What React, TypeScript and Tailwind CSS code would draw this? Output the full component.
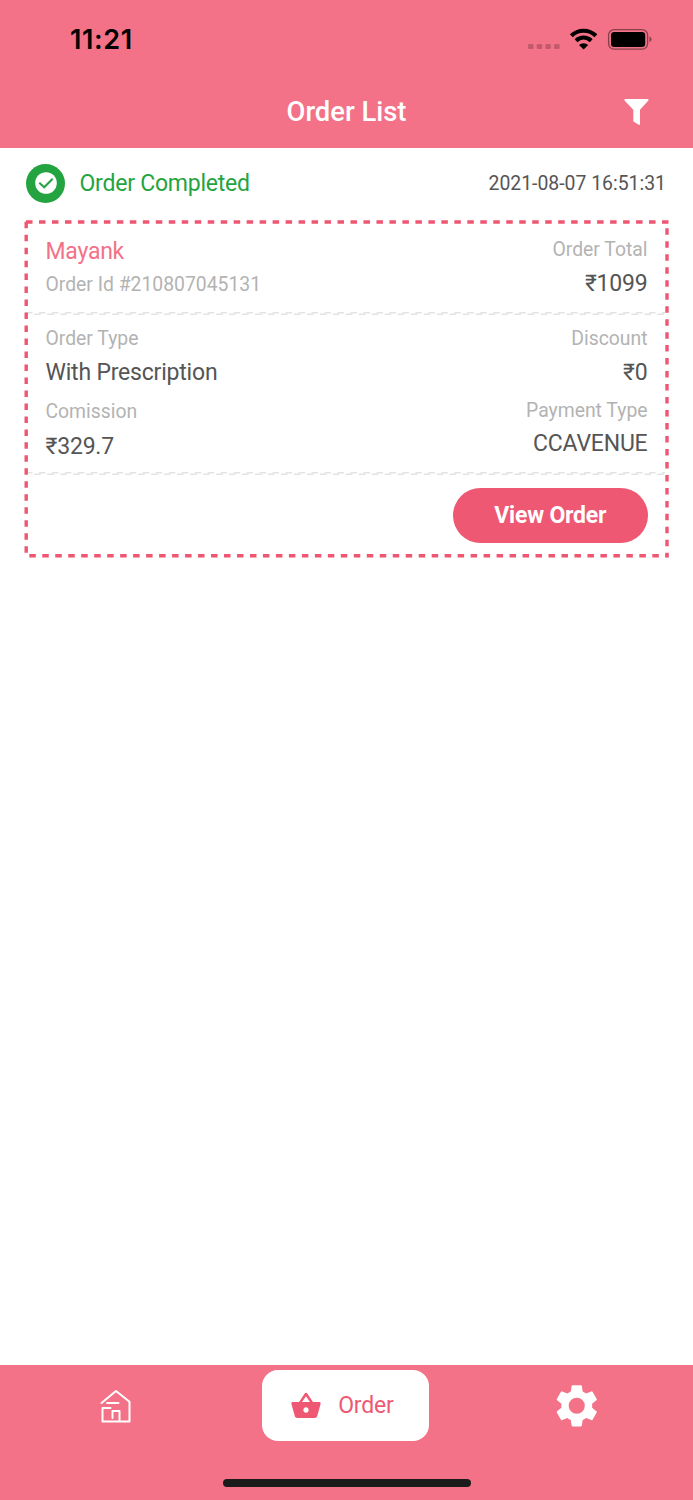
import { MdShoppingBasket } from 'react-icons/md';

const order = {
  status: 'Order Completed',
  date: '2021-08-07 16:51:31',
  customer: 'Mayank',
  id: 'Order Id #210807045131',
};

const StatusBar = () => (
  <div className="flex h-[76px] items-start justify-between pt-[22px] pr-[41px] pl-[70px] text-black">
    <span className="font-[Inter] text-[27px] leading-[35px] font-semibold tracking-[0.6px]">
      11:21
    </span>
    <svg className="mt-[4px]" width="126" height="28" viewBox="526 26 126 28" fill="none">
      <g fill="#c25a6b">
        <rect x="528" y="44" width="5.5" height="5" rx="1.3" />
        <rect x="536.7" y="44" width="5.5" height="5" rx="1.3" />
        <rect x="545.4" y="44" width="5.5" height="5" rx="1.3" />
        <rect x="554.1" y="44" width="5.5" height="5" rx="1.3" />
      </g>
      <g stroke="#000" strokeWidth="4.1">
        <path d="M571.3 35.8a17.4 17.4 0 0 1 24.6 0" />
        <path d="M576 40.7a10.8 10.8 0 0 1 15.2 0" />
      </g>
      <path d="M583.6 49.6l-4.6-4.6a6.6 6.6 0 0 1 9.2 0z" fill="#000" />
      <rect x="608.6" y="29.6" width="39" height="19.6" rx="5.5" stroke="#85404c" strokeWidth="1.3" />
      <rect x="611" y="32" width="34.2" height="15" rx="3.3" fill="#000" />
      <path d="M649.5 36.5c2.8 1 2.8 4.6 0 5.6z" fill="#85404c" />
    </svg>
  </div>
);

const Header = () => (
  <header className="h-[148px] bg-[#f37287]">
    <StatusBar />
    <div className="grid grid-cols-[1fr_auto_1fr] items-center">
      <h1 className="col-start-2 text-[27.4px] leading-[72px] font-medium text-white">
        Order List
      </h1>
      <svg className="mr-[44.5px] justify-self-end" width="25" height="28" viewBox="0 0 25 28" fill="#fff">
        <path d="M1 1h23q1 .6.4 1.6L16 11.8v14.4q-.3.9-1.3.5L9.8 23.8q-.5-.4-.5-1V11.8L.5 2.6Q.1 1.4 1 1z" />
      </svg>
    </div>
  </header>
);

const DashedFrame = () => (
  <svg
    className="pointer-events-none absolute inset-0"
    width="645"
    height="338"
    viewBox="0 0 645 338"
    stroke="#ee5672"
    strokeWidth="3.4"
    strokeDasharray="6.5 6.48"
  >
    <path d="M2 2H644.5" />
    <path d="M2.2 1.7V333" />
    <path d="M643 8.3V337.3" />
    <path d="M5.3 335.7H644.5" />
  </svg>
);

const Divider = () => (
  <svg className="block shrink-0" width="644" height="4" viewBox="0 0 644 4" stroke="#e3e3e3" strokeWidth="1.4">
    <path d="M2 .8H641" strokeDasharray="6.5 6.48" />
    <path d="M10.3 2.2H641" strokeDasharray="6.5 6.48" />
  </svg>
);

const GearIcon = () => (
  <svg className="mr-[2px]" width="49.5" height="49.5" viewBox="0 0 24 24" fill="#fff" fillRule="evenodd">
    <path d="M19.43 12.98c.04-.32.07-.64.07-.98s-.03-.66-.07-.98l2.11-1.65c.19-.15.24-.42.12-.64l-2-3.46c-.12-.22-.39-.3-.61-.22l-2.49 1c-.52-.4-1.08-.73-1.69-.98l-.38-2.65C14.46 2.18 14.25 2 14 2h-4c-.25 0-.46.18-.49.42l-.38 2.65c-.61.25-1.17.59-1.69.98l-2.49-1c-.23-.09-.49 0-.61.22l-2 3.46c-.13.22-.07.49.12.64l2.11 1.65c-.04.32-.07.65-.07.98s.03.66.07.98l-2.11 1.65c-.19.15-.24.42-.12.64l2 3.46c.12.22.39.3.61.22l2.49-1c.52.4 1.08.73 1.69.98l.38 2.65c.03.24.24.42.49.42h4c.25 0 .46-.18.49-.42l.38-2.65c.61-.25 1.17-.59 1.69-.98l2.49 1c.23.09.49 0 .61-.22l2-3.46c.12-.22.07-.49-.12-.64zM12 8.1a3.9 3.9 0 1 0 0 7.8a3.9 3.9 0 1 0 0-7.8z" />
  </svg>
);

const label = 'text-[19.35px] leading-[24px] text-[#b3b3b3]';
const value = 'text-[23px] leading-[28px] tracking-[-0.2px] text-[#555]';

const OrderCard = () => (
  <article className="relative mx-[24px] mt-[2px] h-[338px]">
    <DashedFrame />
    <div className="flex h-[92px] justify-between px-[21.5px]">
      <div className="pt-[18px]">
        <p className="text-[23px] leading-[28px] tracking-[-0.25px] text-[#f37287]">{order.customer}</p>
        <p className={`mt-[7px] ${label}`}>{order.id}</p>
      </div>
      <div className="pt-[18px] text-right">
        <p className={label}>Order Total</p>
        <p className={`mt-[8px] ${value}`}>₹1099</p>
      </div>
    </div>
    <Divider />
    <div className="flex h-[156px] justify-between px-[21.5px] pt-[11px]">
      <div>
        <p className={label}>Order Type</p>
        <p className={`mt-[8px] ${value}`}>With Prescription</p>
        <p className={`mt-[13px] ${label}`}>Comission</p>
        <p className={`mt-[9px] ${value}`}>₹329.7</p>
      </div>
      <div className="text-right">
        <p className={label}>Discount</p>
        <p className={`mt-[8px] ${value}`}>₹0</p>
        <p className={`mt-[12px] ${label}`}>Payment Type</p>
        <p className={`mt-[7px] ${value}`}>CCAVENUE</p>
      </div>
    </div>
    <Divider />
    <div className="flex justify-end pt-[12px] pr-[21.5px]">
      <button className="h-[55px] w-[194.5px] rounded-full bg-[#ee5872] pt-[2px] text-[23px] font-bold tracking-[-0.2px] text-white">
        View Order
      </button>
    </div>
  </article>
);

const TabBar = () => (
  <nav className="flex h-[135px] flex-col items-center bg-[#f37287]">
    <div className="grid w-full grid-cols-3 items-center justify-items-center pt-[5px]">
      <svg width="32" height="34" viewBox="0 0 32 34" fill="none" stroke="#fff" strokeWidth="2" strokeLinecap="round" strokeLinejoin="round">
        <path d="M1.5 14 16 2l13.5 10.8V32.5H2.5V19H10.5" />
        <path d="M7 14H18.5" />
        <path d="M12.5 29V22H19.5V32" />
      </svg>
      <div className="mr-[1.6px] flex h-[71px] w-[167px] items-center rounded-[16px] bg-white pl-[28px] text-[#ee5872]">
        <MdShoppingBasket size={32} />
        <span className="ml-[16px] pt-[2px] text-[23px] tracking-[-0.2px]">Order</span>
      </div>
      <GearIcon />
    </div>
    <div className="mt-[38px] h-[8px] w-[248px] rounded-full bg-[#1b1b1b]" />
  </nav>
);

export default function App() {
  return (
    <div className="flex h-[1500px] w-[693px] flex-col bg-white font-[Roboto,sans-serif]">
      <Header />
      <main className="flex-1">
        <div className="flex h-[70px] items-center pr-[27px] pl-[26px]">
          <div className="flex size-[39px] items-center justify-center rounded-full bg-[#24a440] pl-px">
            <svg width="22" height="22" viewBox="0 0 22 22">
              <circle cx="11" cy="11" r="10.8" fill="#fff" />
              <path d="M4.3 10.7 9.2 15.3 17.7 6.7" fill="none" stroke="#24a440" strokeWidth="2" />
            </svg>
          </div>
          <span className="ml-[14.5px] pt-[2px] text-[23px] tracking-[-0.23px] text-[#24a440]">{order.status}</span>
          <time className="ml-auto pt-[2px] text-[19.4px] text-[#555]">{order.date}</time>
        </div>
        <OrderCard />
      </main>
      <TabBar />
    </div>
  );
}
